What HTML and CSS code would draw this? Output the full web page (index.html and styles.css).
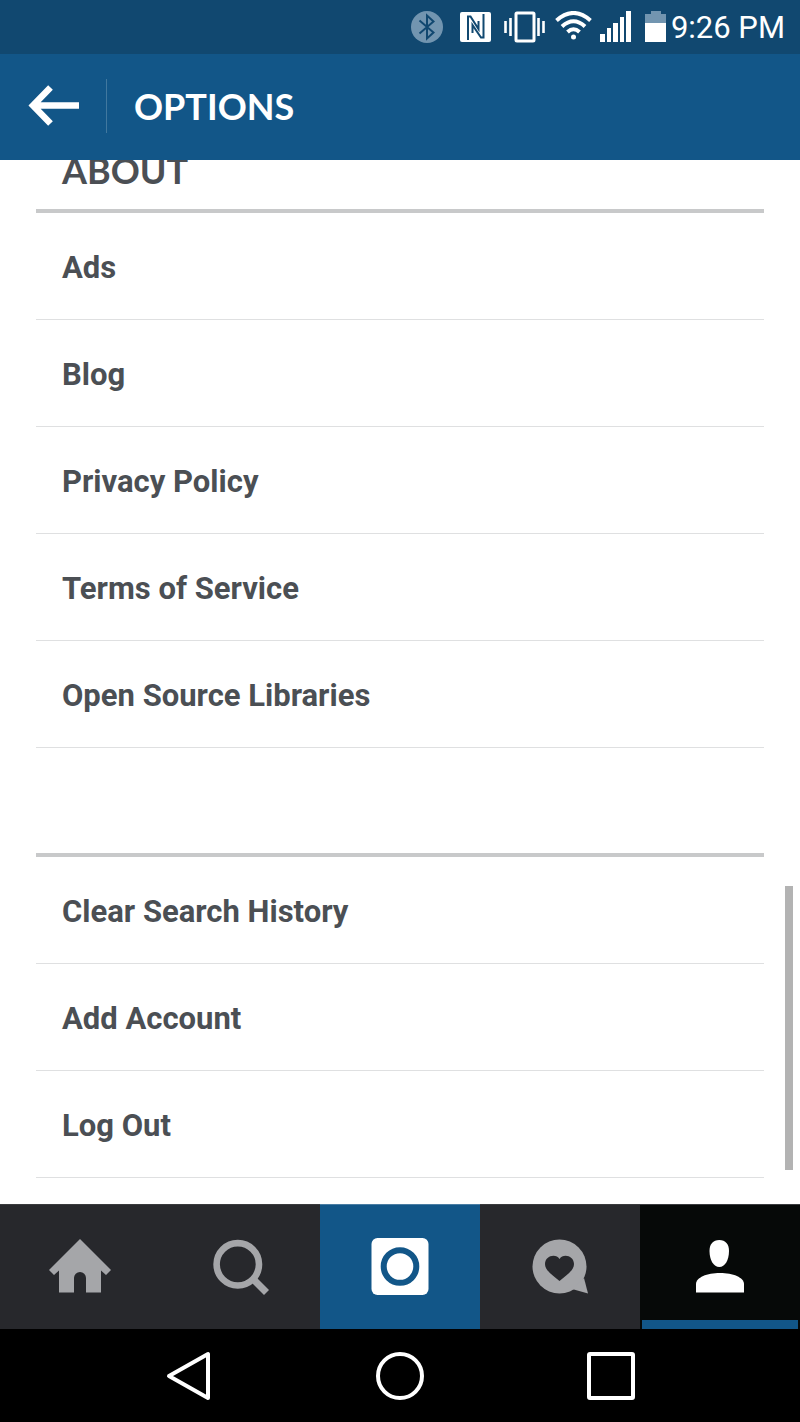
FILE: index.html
```html
<!DOCTYPE html>
<html lang="en">
<head>
    <meta charset="UTF-8">
    <meta name="viewport" content="width=device-width, initial-scale=1.0">
    <title>Options</title>
    <link rel="stylesheet" href="styles.css">
</head>
<body>

<div class="status-bar">
    <svg class="status-icon" width="36" height="32" viewBox="0 0 36 32">
        <circle cx="16" cy="16" r="16" fill="#7295b0"/>
        <path d="M8.500 9.500L22.500 21.500L16 27.500V4.500L22.500 10.500L8.500 22.500" fill="none" stroke="#114870" stroke-width="2"/>
    </svg>
    <svg class="status-icon" width="41" height="32" viewBox="0 0 41 32">
        <rect x="5" y="1" width="31" height="30" rx="2" fill="#fff"/>
        <path d="M13 29V5.500H15.500L23.500 18V10M28.500 3V26.500H26L17.500 14V22" fill="none" stroke="#114870" stroke-width="2"/>
    </svg>
    <svg class="status-icon" width="41" height="32" viewBox="0 0 41 32">
        <rect x="12" y="2" width="18" height="28" rx="1" fill="none" stroke="#fff" stroke-width="3"/>
        <path d="M1.500 10V22M6.500 7V25M34.500 7V25M39.500 10V22" fill="none" stroke="#fff" stroke-width="2.600"/>
    </svg>
    <svg class="status-icon" width="39" height="32" viewBox="0 0 39 32">
        <g fill="none" stroke="#fff" stroke-width="4">
            <path d="M3.500 9.500Q20.500 -5.500 37.500 9.500"/>
            <path d="M9 15.500Q20.500 5 32 15.500"/>
            <path d="M14.500 21Q20.500 15.500 26.500 21"/>
        </g>
        <circle cx="20.500" cy="26" r="2.500" fill="#fff"/>
    </svg>
    <svg class="status-icon" width="32" height="32" viewBox="0 0 32 32">
        <path d="M0 23h5v8H0zM7 17h4v14H7zM13 12h5v19h-5zM20 6h4v25h-4zM26 0h5v31h-5z" fill="#fff"/>
    </svg>
    <div class="battery-clock">
        <svg class="status-icon" width="27" height="32" viewBox="0 0 27 32">
            <path d="M5 3h6V0h10v3h5v9H5z" fill="#7295b0"/>
            <path d="M5 12h21v19H5z" fill="#fff"/>
        </svg>
        <span class="clock">9:26 PM</span>
    </div>
</div>

<header class="app-bar">
    <button type="button" class="back-button" aria-label="Back">
        <svg width="51" height="42" viewBox="0 0 51 42">
            <path d="M22.500 2.500L5 20.500L22.500 38.500M5 20.500H51" fill="none" stroke="#fff" stroke-width="6.500"/>
        </svg>
    </button>
    <h1 class="app-title">OPTIONS</h1>
</header>

<main class="content">
    <h2 class="section-title">ABOUT</h2>
    <ul class="option-list">
        <li><a href="#">Ads</a></li>
        <li><a href="#">Blog</a></li>
        <li><a href="#">Privacy Policy</a></li>
        <li><a href="#">Terms of Service</a></li>
        <li><a href="#">Open Source Libraries</a></li>
    </ul>
    <ul class="option-list account-list">
        <li><a href="#">Clear Search History</a></li>
        <li><a href="#">Add Account</a></li>
        <li><a href="#">Log Out</a></li>
    </ul>
    <div class="scroll-thumb"></div>
</main>

<nav class="tab-bar">
    <a href="#" class="tab" aria-label="Home">
        <svg width="64" height="64" viewBox="0 0 64 64">
            <path d="M32 4L63 35L58 40L53 35.500V57.500H38V43a6 6 0 0 0-12 0V57.500H11V35.500L6 40L1 35Z" fill="#a5a6a9"/>
        </svg>
    </a>
    <a href="#" class="tab" aria-label="Search">
        <svg width="64" height="64" viewBox="0 0 64 64">
            <circle cx="29.800" cy="29.300" r="21.200" fill="none" stroke="#a5a6a9" stroke-width="6.600"/>
            <path d="M45 44L58.500 57.500" fill="none" stroke="#a5a6a9" stroke-width="7"/>
        </svg>
    </a>
    <a href="#" class="tab tab-camera" aria-label="Camera">
        <svg width="64" height="64" viewBox="0 0 64 64">
            <rect x="3.500" y="3" width="57" height="57" rx="6" fill="#fff"/>
            <circle cx="32" cy="31.500" r="16.300" fill="none" stroke="#125688" stroke-width="6"/>
        </svg>
    </a>
    <a href="#" class="tab" aria-label="Activity">
        <svg width="64" height="64" viewBox="0 0 64 64">
            <circle cx="31.500" cy="31.500" r="27" fill="#a5a6a9"/>
            <path d="M56 43L60 58.500L44 54Z" fill="#a5a6a9"/>
            <path d="M31.500 46C26 41 17 36 17 29C17 20.500 28 18 31.500 24C35 18 46 20.500 46 29C46 36 37 41 31.500 46Z" fill="#27282c"/>
        </svg>
    </a>
    <a href="#" class="tab tab-active" aria-label="Profile">
        <svg width="64" height="64" viewBox="0 0 64 64">
            <path d="M31.300 5C37.500 5 41 9 41 16C41 25 37 32 31.300 32S21.500 25 21.500 16C21.500 9 25 5 31.300 5Z" fill="#fff"/>
            <path d="M8 57.500V49C8 42.500 19 38 32 38S56 42.500 56 49V57.500Z" fill="#fff"/>
        </svg>
    </a>
</nav>

<div class="system-bar">
    <button type="button" class="system-button" aria-label="Back">
        <svg width="50" height="50" viewBox="0 0 50 50">
            <path d="M44 3V47L5 25Z" fill="none" stroke="#fff" stroke-width="4" stroke-linejoin="round"/>
        </svg>
    </button>
    <button type="button" class="system-button" aria-label="Home">
        <svg width="50" height="50" viewBox="0 0 50 50">
            <circle cx="25" cy="25" r="22" fill="none" stroke="#fff" stroke-width="4"/>
        </svg>
    </button>
    <button type="button" class="system-button" aria-label="Recent apps">
        <svg width="50" height="50" viewBox="0 0 50 50">
            <rect x="3" y="3" width="44" height="44" rx="1" fill="none" stroke="#fff" stroke-width="4"/>
        </svg>
    </button>
</div>

</body>
</html>
```
FILE: styles.css
```css
* {
    box-sizing: border-box;
}

body {
    margin: 0;
    height: 100vh;
    display: flex;
    flex-direction: column;
    font-family: Roboto, sans-serif;
    background-color: #fff;
    color: #4b4f54;
}

svg {
    display: block;
}

button {
    padding: 0;
    border: none;
    background: none;
    cursor: pointer;
}

/* Status bar */
.status-bar {
    display: flex;
    flex-shrink: 0;
    justify-content: flex-end;
    align-items: center;
    gap: 8px;
    height: 54px;
    padding-right: 15px;
    background-color: #114870;
    color: #fff;
}

.status-icon {
    flex-shrink: 0;
}

.battery-clock {
    display: flex;
    align-items: center;
    gap: 4px;
}

.clock {
    padding-top: 2px;
    font-size: 31px;
    line-height: 36px;
    white-space: nowrap;
}

/* App bar */
.app-bar {
    display: flex;
    flex-shrink: 0;
    align-items: center;
    height: 106px;
    padding: 0 28px 2px;
    background-color: #125688;
    color: #fff;
}

.back-button {
    width: 79px;
    height: 54px;
    border-right: 1px solid #41789f;
}

.app-title {
    margin: 0 0 0 27px;
    font-family: Lato, sans-serif;
    font-size: 36px;
    line-height: 48px;
    font-weight: bold;
}

/* Option list, kept at the end of its scroll */
.content {
    position: relative;
    display: flex;
    flex: 1;
    flex-direction: column;
    justify-content: flex-end;
    min-height: 0;
    overflow: hidden;
    padding: 0 36px 26px;
}

.section-title {
    margin: 0;
    padding: 0 26px 15px;
    font-family: Lato, sans-serif;
    font-size: 36px;
    line-height: 48px;
    font-weight: bold;
}

.option-list {
    list-style: none;
    margin: 0;
    padding: 0;
    border-top: 4px solid #c8c9ca;
}

.account-list {
    margin-top: 105px;
}

.option-list li {
    border-bottom: 1px solid #dfe0e1;
}

.option-list a {
    display: block;
    padding: 37px 26px 33px;
    font-size: 31px;
    line-height: 36px;
    font-weight: bold;
    color: #4b4f54;
    text-decoration: none;
}

.scroll-thumb {
    position: absolute;
    right: 7px;
    bottom: 34px;
    width: 8px;
    height: 284px;
    background-color: #b3b3b3;
}

/* Tab bar */
.tab-bar {
    display: flex;
    flex-shrink: 0;
    height: 125px;
    background-color: #27282c;
}

.tab {
    position: relative;
    display: flex;
    flex: 1;
    align-items: center;
    justify-content: center;
    border-top: 1px solid #3a3b3e;
}

.tab-camera {
    background-color: #125688;
    border-top-color: #4a7da3;
}

.tab-active {
    background-color: #060908;
}

.tab-active::after {
    content: "";
    position: absolute;
    left: 2px;
    right: 2px;
    bottom: 0;
    height: 9px;
    background-color: #125688;
}

/* System navigation */
.system-bar {
    display: grid;
    flex-shrink: 0;
    grid-template-columns: repeat(3, 1fr);
    height: 93px;
    padding: 0 83px;
    background-color: #000;
}

.system-button {
    display: flex;
    align-items: center;
    justify-content: center;
}
```
